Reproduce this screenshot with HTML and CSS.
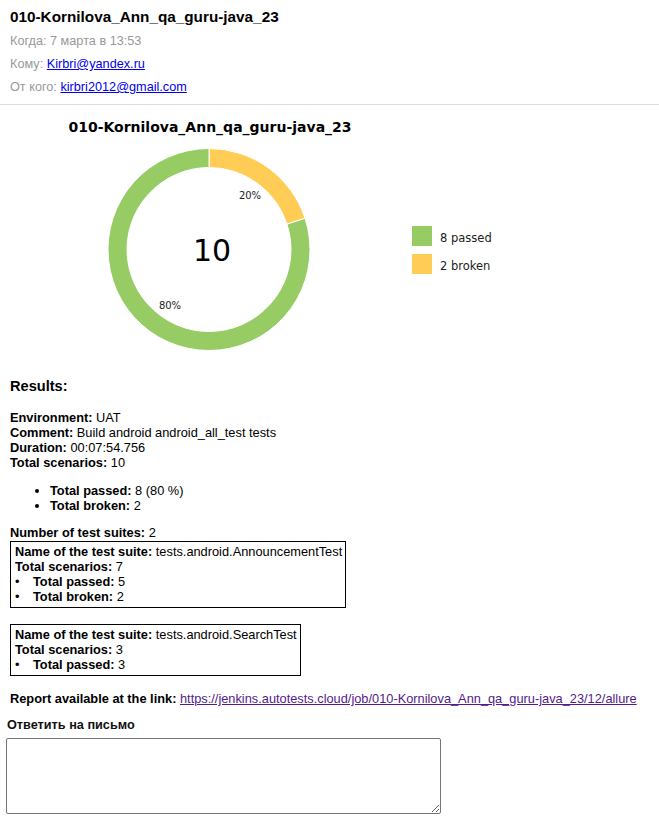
FILE: index.html
```html
<!DOCTYPE html>
<html lang="ru">
<head>
<meta charset="utf-8">
<title>010-Kornilova_Ann_qa_guru-java_23</title>
<link rel="stylesheet" href="styles.css">
</head>
<body>
<header class="mail-head">
  <h1 class="mail-title">010-Kornilova_Ann_qa_guru-java_23</h1>
  <div class="meta">Когда: 7 марта в 13:53</div>
  <div class="meta">Кому: <a class="link" href="#">Kirbri@yandex.ru</a></div>
  <div class="meta">От кого: <a class="link" href="#">kirbri2012@gmail.com</a></div>
</header>

<main class="mail-body">
  <svg class="chart" width="520" height="258" viewBox="0 0 520 258" xmlns="http://www.w3.org/2000/svg">
    <text class="chart-title" x="210" y="27" text-anchor="middle">010-Kornilova_Ann_qa_guru-java_23</text>
    <path d="M209,43.5 A101,101 0 0 1 305.06,113.29 L286.99,119.16 A82,82 0 0 0 209,62.5 Z" fill="#ffcd55" stroke="#ffffff" stroke-width="1"/>
    <path d="M305.06,113.29 A101,101 0 1 1 209,43.5 L209,62.5 A82,82 0 1 0 286.99,119.16 Z" fill="#97cc64" stroke="#ffffff" stroke-width="1"/>
    <text class="chart-total" x="212" y="156" text-anchor="middle">10</text>
    <text class="chart-pct" x="250" y="94" text-anchor="middle">20%</text>
    <text class="chart-pct" x="170" y="204" text-anchor="middle">80%</text>
    <rect x="412" y="121" width="20" height="20" fill="#97cc64"/>
    <text class="chart-legend" x="440" y="136.5">8 passed</text>
    <rect x="412" y="149" width="20" height="20" fill="#ffcd55"/>
    <text class="chart-legend" x="440" y="164.5">2 broken</text>
  </svg>

  <section class="results">
    <h3 class="results-title">Results:</h3>
    <div class="line"><b>Environment:</b> UAT</div>
    <div class="line"><b>Comment:</b> Build android android_all_test tests</div>
    <div class="line"><b>Duration:</b> 00:07:54.756</div>
    <div class="line"><b>Total scenarios:</b> 10</div>
    <ul class="totals">
      <li><b>Total passed:</b> 8 (80 %)</li>
      <li><b>Total broken:</b> 2</li>
    </ul>
    <div class="line"><b>Number of test suites:</b> 2</div>
    <div class="suite suite-first">
      <div class="line"><b>Name of the test suite:</b> tests.android.AnnouncementTest</div>
      <div class="line"><b>Total scenarios:</b> 7</div>
      <div class="line item"><span class="dot">•</span><b>Total passed:</b>&nbsp;5</div>
      <div class="line item"><span class="dot">•</span><b>Total broken:</b>&nbsp;2</div>
    </div>
    <div class="suite suite-next">
      <div class="line"><b>Name of the test suite:</b> tests.android.SearchTest</div>
      <div class="line"><b>Total scenarios:</b> 3</div>
      <div class="line item"><span class="dot">•</span><b>Total passed:</b>&nbsp;3</div>
    </div>
    <div class="line report"><b>Report available at the link:</b> <a class="visited" href="#">https://jenkins.autotests.cloud/job/010-Kornilova_Ann_qa_guru-java_23/12/allure</a></div>
  </section>

  <section class="reply">
    <div class="reply-label">Ответить на письмо</div>
    <textarea class="reply-box"></textarea>
  </section>
</main>
</body>
</html>
```

FILE: styles.css
```css
html, body {
  margin: 0;
  padding: 0;
  background: #ffffff;
}

body {
  font-family: "Liberation Sans", Arial, sans-serif;
  font-size: 12.8px;
  color: #000000;
}

.mail-head {
  padding: 8px 10px 5px;
  border-bottom: 1px solid #dddddd;
}

.mail-title {
  margin: 0 0 4px;
  font-size: 15.3px;
  line-height: 18px;
  font-weight: bold;
  color: #000000;
}

.meta {
  font-size: 12.7px;
  line-height: 23px;
  color: #999999;
}

.link {
  color: #0000ee;
  text-decoration: underline;
}

.visited {
  color: #551a8b;
  text-decoration: underline;
}

.chart {
  display: block;
}

.chart-title {
  font-family: "DejaVu Sans", sans-serif;
  font-size: 14px;
  font-weight: bold;
  fill: #000000;
}

.chart-total {
  font-family: "DejaVu Sans", sans-serif;
  font-size: 30px;
  fill: #000000;
}

.chart-pct {
  font-family: "DejaVu Sans", sans-serif;
  font-size: 10px;
  fill: #222222;
}

.chart-legend {
  font-family: "DejaVu Sans", sans-serif;
  font-size: 11.5px;
  fill: #222222;
}

.results {
  padding: 0 10px;
}

.results-title {
  margin: 15px 0 15px;
  font-size: 14.6px;
  line-height: 17px;
  font-weight: bold;
}

.line {
  line-height: 15px;
  white-space: nowrap;
}

.totals {
  margin: 13px 0 12px;
  padding-left: 40px;
  line-height: 15px;
}

.suite {
  display: table;
  border: 1px solid #000000;
  padding: 2px 3px 3px 4px;
}

.suite-first {
  margin-top: 1px;
}

.suite-next {
  margin-top: 16px;
}

.item {
  display: flex;
}

.dot {
  width: 18px;
  flex: none;
}

.report {
  margin-top: 15px;
}

.reply {
  padding: 12px 7px 0 6px;
}

.reply-label {
  padding-left: 1px;
  font-size: 12.7px;
  font-weight: bold;
  line-height: 15px;
  color: #111111;
}

.reply-box {
  display: block;
  box-sizing: border-box;
  width: 435px;
  height: 76px;
  margin: 5px 0 0;
  padding: 2px;
  border: 1px solid #767676;
  border-radius: 2px;
  font-family: "Liberation Sans", Arial, sans-serif;
  font-size: 13px;
}
```
